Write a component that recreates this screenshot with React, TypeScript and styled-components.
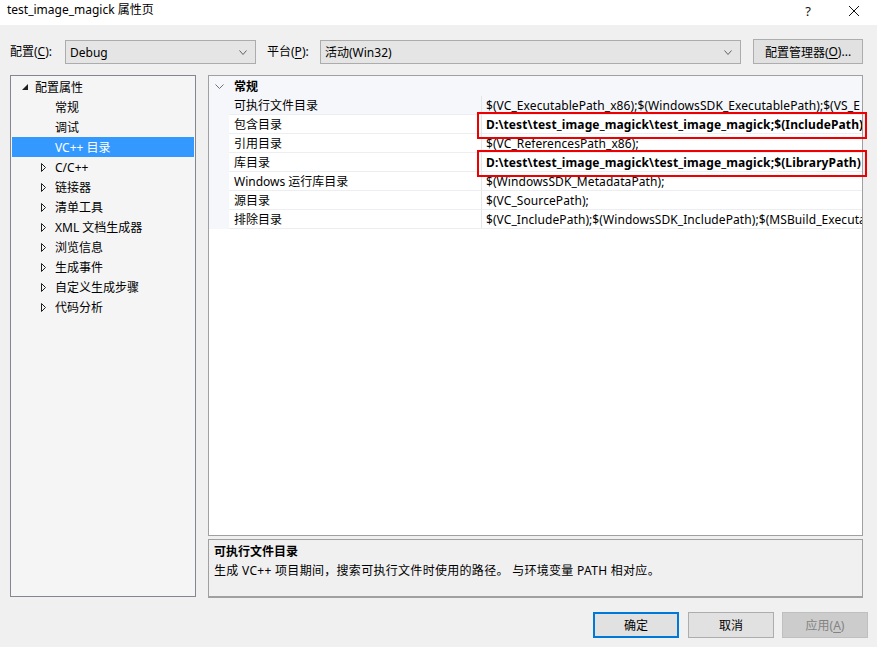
import React from "react";
import styled, { createGlobalStyle } from "styled-components";

const Global = createGlobalStyle`
  html, body { margin: 0; padding: 0; background: #f0f0f0; }
  body {
    font-family: "Noto Sans", "Noto Sans CJK SC", sans-serif;
    font-size: 12px;
    color: #000;
  }
  * { box-sizing: border-box; }
`;

const Window = styled.div`
  width: 877px;
  height: 647px;
  background: #f0f0f0;
  display: flex;
  flex-direction: column;
  overflow: hidden;
`;

const TitleBar = styled.div`
  height: 25px;
  background: #fff;
  display: flex;
  align-items: flex-start;
  padding-left: 7px;
`;

const Title = styled.div`
  flex: 1;
  font-size: 12px;
  line-height: 16px;
  padding-top: 2px;
`;

const CaptionButton = styled.div`
  width: 46px;
  height: 22px;
  display: flex;
  align-items: center;
  justify-content: center;
  font-size: 13px;
  color: #111;
`;

const Toolbar = styled.div`
  margin-top: 14px;
  height: 26px;
  display: flex;
  align-items: flex-start;
  padding-left: 10px;
`;

const Label = styled.div<{ $w: number; $ml?: number }>`
  width: ${(p) => p.$w}px;
  margin-left: ${(p) => p.$ml ?? 0}px;
  height: 25px;
  line-height: 25px;
  font-size: 12px;
`;

const Combo = styled.div<{ $w: number }>`
  width: ${(p) => p.$w}px;
  height: 24px;
  margin-top: 1px;
  background: #e5e5e5;
  border: 1px solid #acacac;
  display: flex;
  align-items: center;
  padding: 0 8px 0 4px;
  font-size: 12px;
`;

const ComboText = styled.span`
  flex: 1;
`;

const PushButton = styled.div<{ $w: number; $ml?: number; $primary?: boolean; $disabled?: boolean }>`
  width: ${(p) => p.$w}px;
  height: ${(p) => (p.$primary !== undefined ? 26 : 25)}px;
  margin-left: ${(p) => p.$ml ?? 0}px;
  background: ${(p) => (p.$disabled ? "#cccccc" : "#e1e1e1")};
  border: ${(p) => (p.$primary ? "2px solid #0078d7" : p.$disabled ? "1px solid #bfbfbf" : "1px solid #adadad")};
  color: ${(p) => (p.$disabled ? "#838383" : "#000")};
  display: flex;
  align-items: center;
  justify-content: center;
  font-size: 12px;
`;

const U = styled.span`
  text-decoration: underline;
  text-underline-offset: 2px;
`;

const Main = styled.div`
  margin-top: 10px;
  display: flex;
  padding-left: 10px;
  gap: 12px;
  height: 523px;
`;

const TreePanel = styled.div`
  width: 186px;
  height: 522px;
  background: #f5f5f5;
  border: 1px solid #828790;
  padding-top: 1px;
  display: flex;
  flex-direction: column;
`;

const TreeRow = styled.div<{ $selected?: boolean; $indent: number }>`
  height: 20px;
  margin: 0 1px;
  display: flex;
  align-items: center;
  padding-left: ${(p) => p.$indent}px;
  background: ${(p) => (p.$selected ? "#3399ff" : "transparent")};
  color: ${(p) => (p.$selected ? "#fff" : "#000")};
  font-size: 12px;
  white-space: nowrap;
`;

const Expander = styled.div<{ $w: number }>`
  width: ${(p) => p.$w}px;
  height: 20px;
  display: flex;
  align-items: center;
  flex-shrink: 0;
`;

const RightColumn = styled.div`
  width: 655px;
  display: flex;
  flex-direction: column;
  gap: 3px;
`;

const GridPanel = styled.div`
  position: relative;
  height: 461px;
  background: #fff;
  border: 1px solid #a0a0a0;
  display: flex;
  flex-direction: column;
`;

const CategoryRow = styled.div`
  height: 20px;
  display: flex;
  align-items: center;
  background: #f5f7fa;
  font-weight: bold;
  font-size: 12px;
`;

const CategoryText = styled.span`
  padding-left: 5px;
`;

const Gutter = styled.div`
  width: 20px;
  align-self: stretch;
  display: flex;
  align-items: center;
  justify-content: center;
  background: #f5f7fa;
  flex-shrink: 0;
`;

const PropRow = styled.div`
  height: 19px;
  display: flex;
`;

const NameCell = styled.div<{ $active?: boolean }>`
  width: 253px;
  flex-shrink: 0;
  border-right: 1px solid #e6e6e6;
  border-bottom: 1px solid #eceef2;
  background: ${(p) => (p.$active ? "#f5f7fa" : "#fff")};
  padding-left: 5px;
  line-height: 19px;
  font-size: 12px;
  white-space: nowrap;
  overflow: hidden;
`;

const ValueCell = styled.div<{ $bold?: boolean; $active?: boolean }>`
  flex: 1;
  min-width: 0;
  border-bottom: 1px solid #eceef2;
  background: ${(p) => (p.$active ? "#f5f7fa" : "#fff")};
  padding-left: 4px;
  line-height: 19px;
  font-size: 12px;
  letter-spacing: ${(p) => (p.$bold ? "0.12px" : "0.08px")};
  font-weight: ${(p) => (p.$bold ? "bold" : "normal")};
  white-space: nowrap;
  overflow: hidden;
`;

const Callout = styled.div<{ $top: number }>`
  position: absolute;
  left: 268px;
  top: ${(p) => p.$top}px;
  width: 390px;
  height: 27px;
  border: 2px solid #ee0000;
  pointer-events: none;
`;

const DescPanel = styled.div`
  height: 59px;
  background: #f0f0f0;
  border: 1px solid #a0a0a0;
  border-bottom: 2px solid #a0a0a0;
  padding: 2px 5px;
`;

const DescTitle = styled.div`
  font-weight: bold;
  font-size: 12px;
  line-height: 19px;
`;

const DescText = styled.div`
  font-size: 12px;
  line-height: 19px;
  letter-spacing: 0.3px;
`;

const Footer = styled.div`
  margin-top: 14px;
  display: flex;
  justify-content: flex-end;
  padding-right: 9px;
`;

const ExpandedIcon = () => (
  <svg width="6" height="6" viewBox="0 0 6 6">
    <polygon points="6,0 6,6 0,6" fill="#1e1e1e" />
  </svg>
);

const CollapsedIcon = () => (
  <svg width="6" height="9" viewBox="0 0 6 9">
    <polygon points="0.5,0.5 4.5,4.5 0.5,8.5" fill="none" stroke="#1e1e1e" strokeWidth="1" />
  </svg>
);

const ChevronDown = ({ w, h, color }: { w: number; h: number; color: string }) => (
  <svg width={w} height={h} viewBox={`0 0 ${w} ${h}`}>
    <polyline points={`0.5,0.5 ${w / 2},${h - 0.5} ${w - 0.5},0.5`} fill="none" stroke={color} strokeWidth="1" />
  </svg>
);

const CloseIcon = () => (
  <svg width="10" height="10" viewBox="0 0 10 10">
    <line x1="0" y1="0" x2="10" y2="10" stroke="#111" strokeWidth="1" />
    <line x1="10" y1="0" x2="0" y2="10" stroke="#111" strokeWidth="1" />
  </svg>
);

type TreeItem = { label: string; level: 0 | 1; kind: "expanded" | "collapsed" | "leaf"; selected?: boolean };

const tree: TreeItem[] = [
  { label: "配置属性", level: 0, kind: "expanded" },
  { label: "常规", level: 1, kind: "leaf" },
  { label: "调试", level: 1, kind: "leaf" },
  { label: "VC++ 目录", level: 1, kind: "leaf", selected: true },
  { label: "C/C++", level: 1, kind: "collapsed" },
  { label: "链接器", level: 1, kind: "collapsed" },
  { label: "清单工具", level: 1, kind: "collapsed" },
  { label: "XML 文档生成器", level: 1, kind: "collapsed" },
  { label: "浏览信息", level: 1, kind: "collapsed" },
  { label: "生成事件", level: 1, kind: "collapsed" },
  { label: "自定义生成步骤", level: 1, kind: "collapsed" },
  { label: "代码分析", level: 1, kind: "collapsed" },
];

type Prop = { name: string; value: string; bold?: boolean; active?: boolean };

const props: Prop[] = [
  { name: "可执行文件目录", value: "$(VC_ExecutablePath_x86);$(WindowsSDK_ExecutablePath);$(VS_E", active: true },
  { name: "包含目录", value: "D:\\test\\test_image_magick\\test_image_magick;$(IncludePath)", bold: true },
  { name: "引用目录", value: "$(VC_ReferencesPath_x86);" },
  { name: "库目录", value: "D:\\test\\test_image_magick\\test_image_magick;$(LibraryPath)", bold: true },
  { name: "Windows 运行库目录", value: "$(WindowsSDK_MetadataPath);" },
  { name: "源目录", value: "$(VC_SourcePath);" },
  { name: "排除目录", value: "$(VC_IncludePath);$(WindowsSDK_IncludePath);$(MSBuild_Executa" },
];

export default function App() {
  return (
    <>
      <Global />
      <Window>
        <TitleBar>
          <Title>test_image_magick 属性页</Title>
          <CaptionButton>?</CaptionButton>
          <CaptionButton>
            <CloseIcon />
          </CaptionButton>
        </TitleBar>

        <Toolbar>
          <Label $w={55}>
            配置(<U>C</U>):
          </Label>
          <Combo $w={191}>
            <ComboText>Debug</ComboText>
            <ChevronDown w={8} h={5} color="#606060" />
          </Combo>
          <Label $w={53} $ml={11}>
            平台(<U>P</U>):
          </Label>
          <Combo $w={421}>
            <ComboText>活动(Win32)</ComboText>
            <ChevronDown w={8} h={5} color="#606060" />
          </Combo>
          <PushButton $w={110} $ml={12}>
            配置管理器(<U>O</U>)...
          </PushButton>
        </Toolbar>

        <Main>
          <TreePanel>
            {tree.map((t) => (
              <TreeRow key={t.label} $selected={t.selected} $indent={t.level === 0 ? 10 : 29}>
                <Expander $w={t.level === 0 ? 13 : 14}>
                  {t.kind === "expanded" && <ExpandedIcon />}
                  {t.kind === "collapsed" && <CollapsedIcon />}
                </Expander>
                <span>{t.label}</span>
              </TreeRow>
            ))}
          </TreePanel>

          <RightColumn>
            <GridPanel>
              <CategoryRow>
                <Gutter>
                  <ChevronDown w={9} h={5} color="#717171" />
                </Gutter>
                <CategoryText>常规</CategoryText>
              </CategoryRow>
              {props.map((p) => (
                <PropRow key={p.name}>
                  <Gutter />
                  <NameCell $active={p.active}>{p.name}</NameCell>
                  <ValueCell $bold={p.bold} $active={p.active}>
                    {p.value}
                  </ValueCell>
                </PropRow>
              ))}
              <Callout $top={36} />
              <Callout $top={74} />
            </GridPanel>
            <DescPanel>
              <DescTitle>可执行文件目录</DescTitle>
              <DescText>生成 VC++ 项目期间，搜索可执行文件时使用的路径。 与环境变量 PATH 相对应。</DescText>
            </DescPanel>
          </RightColumn>
        </Main>

        <Footer>
          <PushButton $w={86} $primary>
            确定
          </PushButton>
          <PushButton $w={86} $ml={9} $primary={false}>
            取消
          </PushButton>
          <PushButton $w={86} $ml={8} $primary={false} $disabled>
            应用(<U>A</U>)
          </PushButton>
        </Footer>
      </Window>
    </>
  );
}
